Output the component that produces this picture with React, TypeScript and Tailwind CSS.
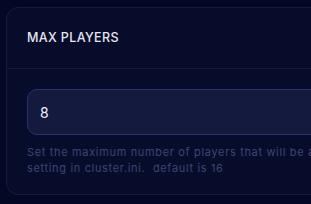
import React from "react";

export default function App() {
  return (
    <div className="w-[311px] h-[204px] overflow-hidden bg-[#050824]" style={{ fontFamily: "Inter, 'Noto Sans', sans-serif" }}>
      <div className="pt-[7px] pl-[6px]">
        <div className="w-[600px] rounded-xl border border-[#161b3c] bg-[#080c2b]">
          <div className="h-[61px] flex items-center px-5 border-b border-[#161b3c]">
            <span className="text-[12.5px] font-medium tracking-[0.03em] text-[#e4e6f0]">MAX PLAYERS</span>
          </div>
          <div className="px-5 pt-5 pb-[18px]">
            <div className="h-[46px] rounded-[10px] border border-[#283070] bg-[#141a3d] flex items-center px-3">
              <span className="text-[14px] text-[#eef0f8]">8</span>
            </div>
            <p className="mt-[9px] text-[11px] leading-[16px] tracking-[0.06em] text-[#3c4470] whitespace-nowrap">
              Set the maximum number of players that will be allowed to join the server. This overrides the max_players
              <br />
              setting in cluster.ini.&nbsp; default is 16
            </p>
          </div>
        </div>
      </div>
    </div>
  );
}
